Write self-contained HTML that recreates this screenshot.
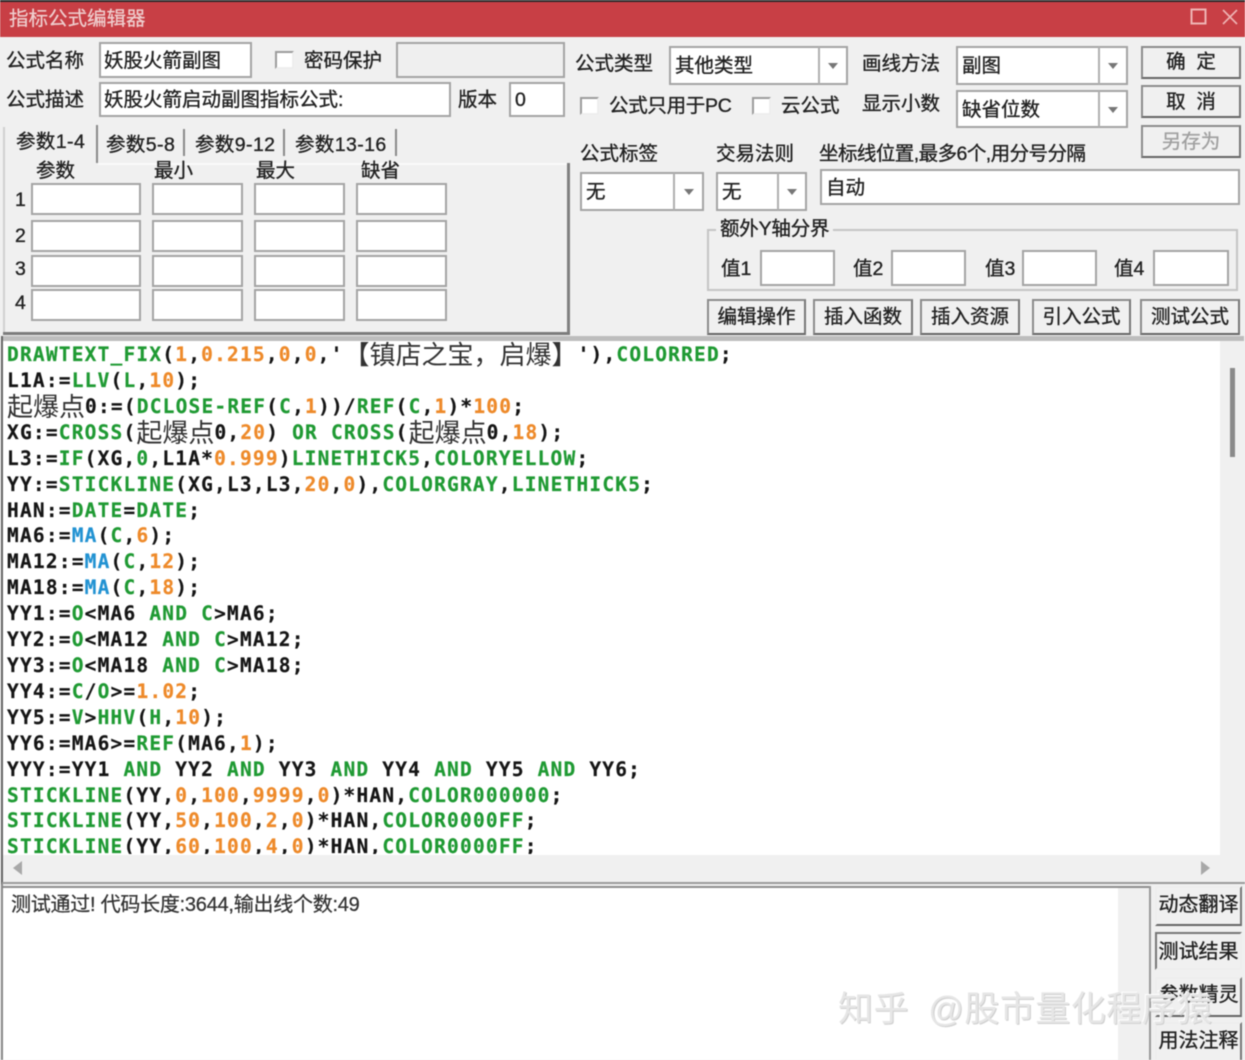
<!DOCTYPE html>
<html lang="zh"><head><meta charset="utf-8"><title>指标公式编辑器</title>
<style>
html,body{margin:0;padding:0;background:#f0f0f0}
#r{position:relative;width:1245px;height:1060px;overflow:hidden;background:#f0f0f0;filter:blur(.55px);font-family:"Liberation Sans","Noto Sans CJK SC",sans-serif;color:#222}
#r div{position:absolute;box-sizing:border-box}
.t{font-size:19.5px;line-height:26px;white-space:nowrap;height:26px;-webkit-text-stroke:.35px #222}
.i{background:#fff;border:2px solid #a4a4a4}
.cb{background:#fff;border:2px solid #9c9c9c;border-right-color:#eee;border-bottom-color:#eee}
.sep{width:2px;background:#b0b0b0}
.btn{background:#f0f0f0;border:2px solid #8c8c8c;border-right-color:#777;border-bottom-color:#666;text-align:center;font-size:19.5px;white-space:nowrap;-webkit-text-stroke:.35px currentColor}
.a{width:0;height:0;border-left:5px solid transparent;border-right:5px solid transparent;border-top:6px solid #777}
.v{width:2px;background:#777}
#code{left:3px;top:341px;width:1217px;height:513px;background:#fff;overflow:hidden}
#code div{left:4px;margin-top:.5px;height:26px;white-space:pre;font:bold 19.5px/26px "DejaVu Sans Mono",monospace;letter-spacing:1.2px;color:#151515;-webkit-text-stroke:.2px currentColor}
.g{color:#1f9a33}.o{color:#ee8a2a}.b{color:#2192d2}
.c{font:400 26px/0 "Noto Sans CJK SC",sans-serif;color:#333;letter-spacing:0;position:relative;top:3px;-webkit-text-stroke:0}
</style></head><body><div id="r">
<div style="left:0;top:0;width:1245px;height:37px;background:#c83f45;border-top:2px solid #2a2a2a"></div>
<div class="t" style="left:9px;top:6px;font-size:19.5px;color:#efcfcf;-webkit-text-stroke:.2px #efcfcf">指标公式编辑器</div>
<svg style="position:absolute;left:1190px;top:8px" width="50" height="18"><rect x="1.5" y="1.5" width="14" height="14" fill="none" stroke="#eeb4b4" stroke-width="2"/><path d="M33 2L47 16M47 2L33 16" stroke="#eeb4b4" stroke-width="1.6" fill="none"/></svg>

<div class="t" style="left:6px;top:48px">公式名称</div>
<div class="i" style="left:99px;top:42px;width:153px;height:36px"></div>
<div class="t" style="left:104px;top:48px">妖股火箭副图</div>
<div class="cb" style="left:275px;top:51px;width:19px;height:18px"></div>
<div class="t" style="left:304px;top:48px">密码保护</div>
<div class="i" style="left:396px;top:42px;width:169px;height:36px;background:#efefef"></div>
<div class="t" style="left:6px;top:87px">公式描述</div>
<div class="i" style="left:99px;top:82px;width:352px;height:35px"></div>
<div class="t" style="left:104px;top:87px">妖股火箭启动副图指标公式:</div>
<div class="t" style="left:458px;top:87px">版本</div>
<div class="i" style="left:509px;top:82px;width:56px;height:35px"></div>
<div class="t" style="left:515px;top:87px">0</div>

<div style="left:3px;top:127px;width:2px;height:205px;background:#d0d0d0"></div>
<div class="t" style="left:16px;top:129px;letter-spacing:.4px">参数1-4</div>
<div class="v" style="left:96px;top:125px;height:38px;background:#8a8a8a"></div>
<div class="t" style="left:106px;top:132px;letter-spacing:.4px">参数5-8</div>
<div class="v" style="left:183px;top:129px;height:27px;background:#8a8a8a"></div>
<div class="t" style="left:195px;top:132px;letter-spacing:.4px">参数9-12</div>
<div class="v" style="left:283px;top:129px;height:27px;background:#8a8a8a"></div>
<div class="t" style="left:295px;top:132px;letter-spacing:.4px">参数13-16</div>
<div class="v" style="left:395px;top:129px;height:27px;background:#8a8a8a"></div>
<div style="left:98px;top:163px;width:470px;height:2px;background:#fafafa"></div>
<div style="left:567px;top:163px;width:3px;height:171px;background:#808080"></div>
<div style="left:3px;top:332px;width:567px;height:3px;background:#7c7c7c"></div>

<div class="t" style="left:36px;top:158px">参数</div>
<div class="t" style="left:154px;top:158px">最小</div>
<div class="t" style="left:256px;top:158px">最大</div>
<div class="t" style="left:361px;top:158px">缺省</div>
<div class="t" style="left:15px;top:187px">1</div>
<div class="t" style="left:15px;top:223px">2</div>
<div class="t" style="left:15px;top:256px">3</div>
<div class="t" style="left:15px;top:290px">4</div>

<div class="i" style="left:31px;top:183px;width:110px;height:32px"></div><div class="i" style="left:152px;top:183px;width:91px;height:32px"></div><div class="i" style="left:254px;top:183px;width:91px;height:32px"></div><div class="i" style="left:356px;top:183px;width:91px;height:32px"></div>
<div class="i" style="left:31px;top:220px;width:110px;height:32px"></div><div class="i" style="left:152px;top:220px;width:91px;height:32px"></div><div class="i" style="left:254px;top:220px;width:91px;height:32px"></div><div class="i" style="left:356px;top:220px;width:91px;height:32px"></div>
<div class="i" style="left:31px;top:255px;width:110px;height:32px"></div><div class="i" style="left:152px;top:255px;width:91px;height:32px"></div><div class="i" style="left:254px;top:255px;width:91px;height:32px"></div><div class="i" style="left:356px;top:255px;width:91px;height:32px"></div>
<div class="i" style="left:31px;top:289px;width:110px;height:32px"></div><div class="i" style="left:152px;top:289px;width:91px;height:32px"></div><div class="i" style="left:254px;top:289px;width:91px;height:32px"></div><div class="i" style="left:356px;top:289px;width:91px;height:32px"></div>

<div class="t" style="left:575px;top:51px">公式类型</div>
<div class="i" style="left:669px;top:46px;width:179px;height:39px"></div><div class="sep" style="left:818px;top:47px;height:37px"></div><div class="a" style="left:828px;top:63px"></div>
<div class="t" style="left:675px;top:53px">其他类型</div>
<div class="t" style="left:862px;top:51px">画线方法</div>
<div class="i" style="left:956px;top:46px;width:172px;height:39px"></div><div class="sep" style="left:1098px;top:47px;height:37px"></div><div class="a" style="left:1108px;top:63px"></div>
<div class="t" style="left:962px;top:53px">副图</div>
<div class="btn" style="left:1141px;top:46px;width:100px;height:33px;line-height:28px">确&nbsp;&nbsp;定</div>
<div class="btn" style="left:1141px;top:85px;width:100px;height:33px;line-height:30px">取&nbsp;&nbsp;消</div>
<div class="btn" style="left:1141px;top:125px;width:100px;height:33px;line-height:30px;color:#a0a0a0">另存为</div>

<div class="cb" style="left:580px;top:97px;width:19px;height:18px"></div>
<div class="t" style="left:609px;top:93px;letter-spacing:-.3px">公式只用于PC</div>
<div class="cb" style="left:752px;top:97px;width:19px;height:18px"></div>
<div class="t" style="left:781px;top:93px">云公式</div>
<div class="t" style="left:862px;top:91px">显示小数</div>
<div class="i" style="left:956px;top:90px;width:172px;height:38px"></div><div class="sep" style="left:1098px;top:91px;height:36px"></div><div class="a" style="left:1108px;top:107px"></div>
<div class="t" style="left:962px;top:97px">缺省位数</div>

<div class="t" style="left:580px;top:141px">公式标签</div>
<div class="t" style="left:716px;top:141px">交易法则</div>
<div class="t" style="left:819px;top:141px;letter-spacing:-.55px">坐标线位置,最多6个,用分号分隔</div>
<div class="i" style="left:580px;top:172px;width:124px;height:39px"></div><div class="sep" style="left:673px;top:173px;height:37px"></div><div class="a" style="left:684px;top:189px"></div>
<div class="t" style="left:586px;top:179px">无</div>
<div class="i" style="left:716px;top:172px;width:91px;height:39px"></div><div class="sep" style="left:777px;top:173px;height:37px"></div><div class="a" style="left:787px;top:189px"></div>
<div class="t" style="left:722px;top:179px">无</div>
<div class="i" style="left:820px;top:169px;width:420px;height:36px"></div>
<div class="t" style="left:826px;top:175px">自动</div>

<div style="left:707px;top:229px;width:531px;height:62px;border:2px solid #c4c4c4"></div>
<div class="t" style="left:716px;top:216px;padding:0 4px;background:#f0f0f0;letter-spacing:-.2px">额外Y轴分界</div>
<div class="t" style="left:721px;top:256px">值1</div><div class="i" style="left:760px;top:250px;width:75px;height:36px"></div>
<div class="t" style="left:853px;top:256px">值2</div><div class="i" style="left:891px;top:250px;width:75px;height:36px"></div>
<div class="t" style="left:985px;top:256px">值3</div><div class="i" style="left:1022px;top:250px;width:75px;height:36px"></div>
<div class="t" style="left:1114px;top:256px">值4</div><div class="i" style="left:1153px;top:250px;width:76px;height:36px"></div>

<div class="btn" style="left:707px;top:299px;width:99px;height:36px;line-height:33px">编辑操作</div>
<div class="btn" style="left:813px;top:299px;width:100px;height:36px;line-height:33px">插入函数</div>
<div class="btn" style="left:920px;top:299px;width:100px;height:36px;line-height:33px">插入资源</div>
<div class="btn" style="left:1032px;top:299px;width:99px;height:36px;line-height:33px">引入公式</div>
<div class="btn" style="left:1140px;top:299px;width:100px;height:36px;line-height:33px">测试公式</div>

<div style="left:2px;top:336px;width:1242px;height:5px;background:#bdbdbd"></div>
<div style="left:1px;top:336px;width:2px;height:550px;background:#666"></div>
<div style="left:3px;top:341px;width:1217px;height:514px;background:#fff"></div>
<div id="code">
<div style="top:0"><span class="g">DRAWTEXT_FIX</span>(<span class="o">1</span>,<span class="o">0.215</span>,<span class="o">0</span>,<span class="o">0</span>,'<span class="c">【镇店之宝，启爆】</span>'),<span class="g">COLORRED</span>;</div>
<div style="top:26px">L1A:=<span class="g">LLV</span>(<span class="g">L</span>,<span class="o">10</span>);</div>
<div style="top:52px"><span class="c">起爆点</span>0:=(<span class="g">DCLOSE-REF</span>(<span class="g">C</span>,<span class="o">1</span>))/<span class="g">REF</span>(<span class="g">C</span>,<span class="o">1</span>)*<span class="o">100</span>;</div>
<div style="top:78px">XG:=<span class="g">CROSS</span>(<span class="c">起爆点</span>0,<span class="o">20</span>) <span class="g">OR</span> <span class="g">CROSS</span>(<span class="c">起爆点</span>0,<span class="o">18</span>);</div>
<div style="top:104px">L3:=<span class="g">IF</span>(XG,<span class="g">0</span>,L1A*<span class="o">0.999</span>)<span class="g">LINETHICK5</span>,<span class="g">COLORYELLOW</span>;</div>
<div style="top:130px">YY:=<span class="g">STICKLINE</span>(XG,L3,L3,<span class="o">20</span>,<span class="o">0</span>),<span class="g">COLORGRAY</span>,<span class="g">LINETHICK5</span>;</div>
<div style="top:156px">HAN:=<span class="g">DATE</span>=<span class="g">DATE</span>;</div>
<div style="top:181.5px">MA6:=<span class="b">MA</span>(<span class="g">C</span>,<span class="o">6</span>);</div>
<div style="top:207.5px">MA12:=<span class="b">MA</span>(<span class="g">C</span>,<span class="o">12</span>);</div>
<div style="top:233.5px">MA18:=<span class="b">MA</span>(<span class="g">C</span>,<span class="o">18</span>);</div>
<div style="top:259px">YY1:=<span class="g">O</span>&lt;MA6 <span class="g">AND</span> <span class="g">C</span>&gt;MA6;</div>
<div style="top:285px">YY2:=<span class="g">O</span>&lt;MA12 <span class="g">AND</span> <span class="g">C</span>&gt;MA12;</div>
<div style="top:311px">YY3:=<span class="g">O</span>&lt;MA18 <span class="g">AND</span> <span class="g">C</span>&gt;MA18;</div>
<div style="top:337px">YY4:=<span class="g">C</span>/<span class="g">O</span>&gt;=<span class="o">1.02</span>;</div>
<div style="top:363px">YY5:=<span class="g">V</span>&gt;<span class="g">HHV</span>(<span class="g">H</span>,<span class="o">10</span>);</div>
<div style="top:389px">YY6:=MA6&gt;=<span class="g">REF</span>(MA6,<span class="o">1</span>);</div>
<div style="top:415px">YYY:=YY1 <span class="g">AND</span> YY2 <span class="g">AND</span> YY3 <span class="g">AND</span> YY4 <span class="g">AND</span> YY5 <span class="g">AND</span> YY6;</div>
<div style="top:441px"><span class="g">STICKLINE</span>(YY,<span class="o">0</span>,<span class="o">100</span>,<span class="o">9999</span>,<span class="o">0</span>)*HAN,<span class="g">COLOR000000</span>;</div>
<div style="top:466.5px"><span class="g">STICKLINE</span>(YY,<span class="o">50</span>,<span class="o">100</span>,<span class="o">2</span>,<span class="o">0</span>)*HAN,<span class="g">COLOR0000FF</span>;</div>
<div style="top:492.5px"><span class="g">STICKLINE</span>(YY,<span class="o">60</span>,<span class="o">100</span>,<span class="o">4</span>,<span class="o">0</span>)*HAN,<span class="g">COLOR0000FF</span>;</div>
</div>
<div style="left:1230px;top:368px;width:5px;height:89px;background:#8a8a8a"></div>
<div style="left:13px;top:861px;width:0;height:0;border-top:7px solid transparent;border-bottom:7px solid transparent;border-right:9px solid #a8a8a8"></div>
<div style="left:1201px;top:861px;width:0;height:0;border-top:7px solid transparent;border-bottom:7px solid transparent;border-left:9px solid #a8a8a8"></div>
<div style="left:2px;top:882px;width:1243px;height:2px;background:#9a9a9a"></div>
<div style="left:2px;top:886px;width:1148px;height:2px;background:#8e8e8e"></div>
<div style="left:1px;top:884px;width:2px;height:176px;background:#888"></div>
<div style="left:3px;top:888px;width:1115px;height:172px;background:#fff"></div>
<div style="left:1149px;top:886px;width:2px;height:174px;background:#999"></div>
<div class="t" style="left:11px;top:892px;font-size:20px;letter-spacing:-.25px;color:#333;-webkit-text-stroke:.25px #333">测试通过! 代码长度:3644,输出线个数:49</div>

<div class="btn" style="left:1155px;top:886px;width:87px;height:40px;line-height:35px;padding:0;font-size:20px;border-color:#eee #777 #666 #eee">动态翻译</div>
<div class="btn" style="left:1155px;top:932px;width:87px;height:38px;line-height:36px;padding:0;font-size:20px;border-color:#777 #eee #eee #777">测试结果</div>
<div class="btn" style="left:1155px;top:977px;width:87px;height:40px;line-height:33px;padding:0;font-size:20px;border-color:#eee #777 #666 #eee">参数精灵</div>
<div class="btn" style="left:1155px;top:1022px;width:87px;height:40px;line-height:35px;padding:0;font-size:20px;border-color:#eee #777 #666 #eee">用法注释</div>

<div class="t" style="left:838px;top:986px;height:48px;font-size:35px;line-height:48px;letter-spacing:.5px;word-spacing:9px;color:#e6e6e6;-webkit-text-stroke:0;text-shadow:1px 1px 0 #cfcfcf,-1px -1px 0 #fff">知乎 @股市量化程序猿</div>
</div></body></html>
